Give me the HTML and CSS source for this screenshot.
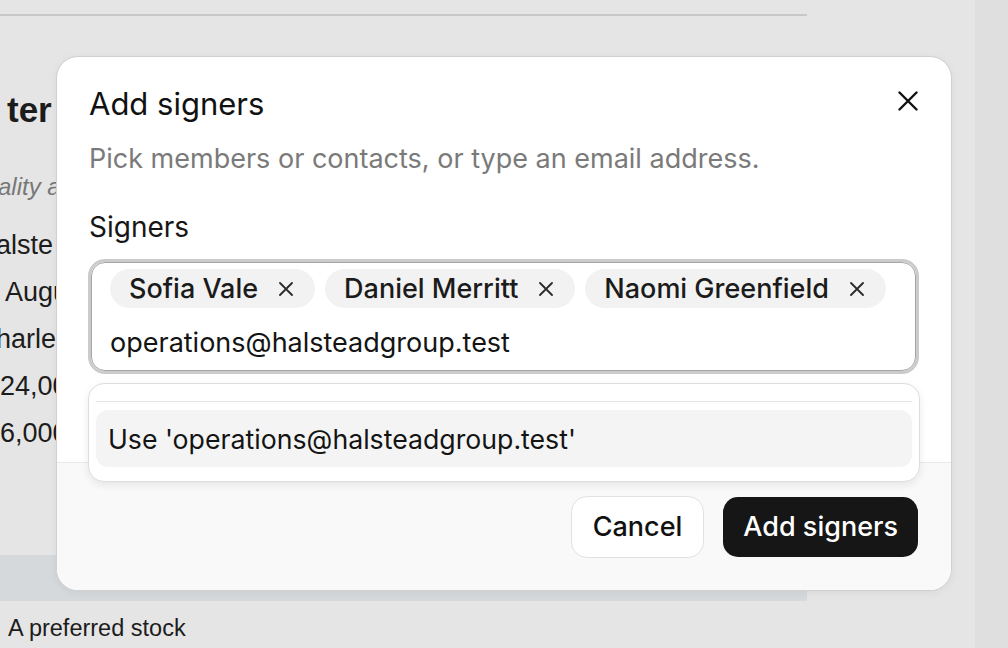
FILE: index.html
```html
<!DOCTYPE html>
<html lang="en">
<head>
<meta charset="utf-8">
<title>Add signers</title>
<link rel="stylesheet" href="styles.css">
</head>
<body>
<div class="screen">
  <main class="page">
    <div class="topbar"></div>
    <h1 class="doc-title">ter</h1>
    <p class="doc-sub">ality a</p>
    <div class="rows">
      <div class="row row-a">alste</div>
      <div class="row row-b">Augu</div>
      <div class="row row-a">harle</div>
      <div class="row">24,00</div>
      <div class="row">6,000</div>
    </div>
    <div class="band"></div>
    <div class="foot-line">A preferred stock</div>
  </main>
  <aside class="side"></aside>
</div>

<div class="dialog" role="dialog" aria-labelledby="dlg-title">
  <div class="dialog-body">
    <div class="dialog-head">
      <h2 id="dlg-title" class="dialog-title">Add signers</h2>
      <button class="close" aria-label="Close">
        <svg width="20" height="20" viewBox="0 0 20 20"><path d="M1.5 1.5 L18.5 18.5 M18.5 1.5 L1.5 18.5" stroke="#111" stroke-width="2.4" stroke-linecap="round" fill="none"/></svg>
      </button>
    </div>
    <p class="dialog-desc">Pick members or contacts, or type an email address.</p>
    <div class="field-label">Signers</div>
    <div class="field">
      <div class="chips">
        <span class="chip">Sofia Vale<svg class="chip-x" width="14" height="14" viewBox="0 0 14 14"><path d="M1 1 L13 13 M13 1 L1 13" stroke="#2a2a2a" stroke-width="1.8" stroke-linecap="round"/></svg></span>
        <span class="chip">Daniel Merritt<svg class="chip-x" width="14" height="14" viewBox="0 0 14 14"><path d="M1 1 L13 13 M13 1 L1 13" stroke="#2a2a2a" stroke-width="1.8" stroke-linecap="round"/></svg></span>
        <span class="chip">Naomi Greenfield<svg class="chip-x" width="14" height="14" viewBox="0 0 14 14"><path d="M1 1 L13 13 M13 1 L1 13" stroke="#2a2a2a" stroke-width="1.8" stroke-linecap="round"/></svg></span>
      </div>
      <div class="field-input">operations@halsteadgroup.test</div>
    </div>
  </div>
  <div class="dialog-foot">
    <button class="btn btn-cancel">Cancel</button>
    <button class="btn btn-primary">Add signers</button>
  </div>
  <div class="popover">
    <div class="pop-spacer"></div>
    <div class="pop-sep"></div>
    <div class="pop-option">Use 'operations@halsteadgroup.test'</div>
  </div>
</div>
</body>
</html>
```

FILE: styles.css
```css
html, body {
  margin: 0;
  padding: 0;
}
body {
  width: 1008px;
  height: 648px;
  overflow: hidden;
  background: #e5e5e5;
  font-family: "Liberation Sans", Arial, sans-serif;
  position: relative;
}
.screen {
  display: grid;
  grid-template-columns: 807px 1fr 33px;
  height: 648px;
}
.page {
  overflow: hidden;
  color: #1c1c1c;
}
.side {
  grid-column: 3;
  background: #dfdfdf;
}
.topbar {
  height: 14px;
  border-bottom: 2px solid #c7c7c7;
}
.doc-title {
  margin: 74px 0 0 7px;
  font-size: 35px;
  line-height: 40px;
  font-weight: 700;
  white-space: nowrap;
}
.doc-sub {
  margin: 42px 0 0 -2px;
  font-size: 24px;
  line-height: 30px;
  font-style: italic;
  color: #777;
  white-space: nowrap;
}
.rows {
  margin-top: 20px;
}
.row {
  font-size: 27px;
  line-height: 47px;
  white-space: nowrap;
}
.row-a { margin-left: -4px; }
.row-b { margin-left: 5px; }
.band {
  margin-top: 98px;
  height: 46px;
  background: #d6d9db;
}
.foot-line {
  margin: 12px 0 0 8px;
  font-size: 23.5px;
  line-height: 30px;
  white-space: nowrap;
}

/* dialog */
.dialog {
  position: absolute;
  left: 56px;
  top: 56px;
  width: 896px;
  height: 535px;
  box-sizing: border-box;
  background: #fff;
  border: 1px solid #d0d0d0;
  border-radius: 22px;
  box-shadow: 0 2px 8px rgba(0,0,0,0.05);
  display: flex;
  flex-direction: column;
  overflow: hidden;
  font-family: Inter, "Liberation Sans", sans-serif;
  color: #141414;
}
.dialog-body {
  flex: 1;
  padding: 29px 33px 0 32px;
}
.dialog-head {
  display: flex;
  justify-content: space-between;
  align-items: flex-start;
}
.dialog-title {
  margin: 0;
  font-size: 31px;
  line-height: 36px;
  font-weight: 400;
  color: #111;
}
.close {
  margin-top: 5px;
  padding: 0;
  border: 0;
  background: none;
  width: 20px;
  height: 20px;
  display: block;
}
.close svg { display: block; }
.dialog-desc {
  margin: 21px 0 0;
  font-size: 27px;
  line-height: 32px;
  color: #7a7a7a;
}
.field-label {
  margin-top: 35px;
  font-size: 28px;
  line-height: 34px;
  font-weight: 400;
  color: #161616;
}
.field {
  margin: 18px 2px 0 2px;
  border: 1px solid #a6a6a6;
  box-shadow: 0 0 0 3px #cbcbcb;
  border-radius: 14px;
  padding: 6px 18px 10px 18px;
  display: flex;
  flex-direction: column;
  row-gap: 18px;
}
.chips {
  display: flex;
  gap: 10px;
}
.chip {
  display: inline-flex;
  align-items: center;
  gap: 21px;
  height: 39px;
  padding: 0 22px 0 19px;
  border-radius: 20px;
  background: #f2f2f2;
  font-size: 27px;
  font-weight: 500;
  color: #1b1b1b;
  white-space: nowrap;
}
.chip-x { display: block; flex: none; }
.field-input {
  font-size: 27px;
  line-height: 34px;
  color: #141414;
}

.dialog-foot {
  height: 128px;
  box-sizing: border-box;
  border-top: 1px solid #e8e8e8;
  background: #f9f9f9;
  display: flex;
  justify-content: flex-end;
  align-items: center;
  gap: 19px;
  padding: 0 33px 0 0;
}
.btn {
  font-family: Inter, "Liberation Sans", sans-serif;
  font-size: 27px;
  font-weight: 500;
  border-radius: 16px;
  cursor: pointer;
}
.btn-cancel {
  height: 62px;
  padding: 0 21px;
  background: #fff;
  border: 1px solid #e2e2e2;
  color: #111;
}
.btn-primary {
  height: 60px;
  padding: 0 20px;
  background: #161616;
  border: 0;
  color: #fff;
  border-radius: 15px;
}

.popover {
  position: absolute;
  left: 31px;
  top: 326px;
  width: 832px;
  height: 99px;
  box-sizing: border-box;
  background: #fff;
  border: 1px solid #dedede;
  border-radius: 16px;
  box-shadow: 0 3px 8px rgba(0,0,0,0.08);
  padding: 0 7px;
}
.pop-spacer { height: 17px; }
.pop-sep {
  height: 1px;
  background: #e4e4e4;
}
.pop-option {
  margin-top: 8px;
  height: 57px;
  border-radius: 12px;
  background: #f4f4f4;
  padding-left: 12px;
  display: flex;
  align-items: center;
  font-size: 26.7px;
  color: #141414;
}
```
